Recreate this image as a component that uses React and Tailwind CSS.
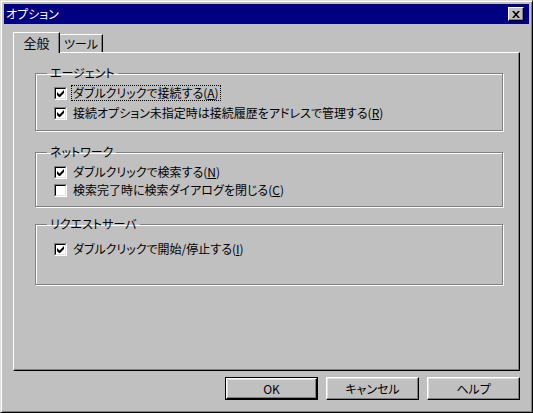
import React from "react";

const font = "font-['Noto_Sans_CJK_JP','Noto_Sans',sans-serif] [font-feature-settings:'palt']";

function CheckBox({ checked }) {
  return (
    <span className="w-[13px] h-[13px] shrink-0 border border-t-[#808080] border-l-[#808080] border-r-white border-b-white">
      <span className="flex w-full h-full items-center justify-center bg-white border border-t-black border-l-black border-r-[#dfdfdf] border-b-[#dfdfdf]">
        {checked && (
          <svg width="7" height="7" viewBox="0 0 7 7">
            <path d="M0 2v3l2 2h1l4-4V0L2.5 4.5z" fill="#000" />
          </svg>
        )}
      </span>
    </span>
  );
}

function Row({ checked, label, mnemonic, focused, h }) {
  return (
    <div className={`flex items-center gap-[5px] pl-[18px] ${h}`}>
      <CheckBox checked={checked} />
      <span
        className={`text-[12px] leading-[14px] px-[1px] text-black ${
          focused ? "outline outline-1 outline-dotted outline-black" : ""
        }`}
      >
        {label}(<u>{mnemonic}</u>)
      </span>
    </div>
  );
}

function Group({ title, children, className }) {
  return (
    <fieldset
      className={`border border-[#808080] shadow-[1px_1px_0_#fff,inset_1px_1px_0_#fff] ${className}`}
    >
      <legend className="ml-[11px] px-[3px] text-[12px] leading-[14px] text-black">
        {title}
      </legend>
      {children}
    </fieldset>
  );
}

function Button({ children, isDefault }) {
  return (
    <button
      className={`w-[93px] h-[23px] text-[12px] text-black bg-[#c0c0c0] ${
        isDefault ? "border border-black" : ""
      }`}
    >
      <span className="flex w-full h-full items-center justify-center border border-t-white border-l-white border-r-black border-b-black shadow-[inset_-1px_-1px_0_#808080,inset_1px_1px_0_#dfdfdf]">
        {children}
      </span>
    </button>
  );
}

export default function App() {
  return (
    <div className={`w-[533px] h-[413px] ${font} bg-[#c0c0c0] border border-t-[#dfdfdf] border-l-[#dfdfdf] border-r-black border-b-black shadow-[inset_1px_1px_0_#fff,inset_-1px_-1px_0_#808080] p-[3px] flex flex-col`}>
      {/* title bar */}
      <div className="h-[20px] bg-[#000080] flex items-center justify-between pl-[2px] pr-[5px]">
        <span className="text-white text-[12px] leading-[14px]">オプション</span>
        <span className="w-[16px] h-[14px] flex items-center justify-center bg-[#c0c0c0] border border-t-white border-l-white border-r-black border-b-black shadow-[inset_-1px_-1px_0_#808080]">
          <svg width="8" height="7" viewBox="0 0 8 7">
            <path d="M0 0h2l2 2.2L6 0h2L5 3.5 8 7H6L4 4.8 2 7H0l3-3.5z" fill="#000" />
          </svg>
        </span>
      </div>

      <div className="flex-1 flex flex-col px-[9px] pt-[8px] pb-[8px]">
        {/* tabs */}
        <div className="flex items-end h-[20px]">
          <div className="relative z-10 -mb-[1px] w-[47px] h-[21px] bg-[#c0c0c0] border-t border-l border-r border-t-white border-l-white border-r-black shadow-[inset_-1px_0_0_#808080] flex items-center justify-center text-[13px] text-black">
            全般
          </div>
          <div className="w-[43px] h-[18px] bg-[#c0c0c0] border-t border-r border-t-white border-r-black shadow-[inset_-1px_0_0_#808080] flex items-center justify-center text-[12px] text-black">
            ツール
          </div>
        </div>

        {/* panel */}
        <div className="h-[319px] border border-t-white border-l-white border-r-black border-b-black shadow-[inset_-1px_-1px_0_#808080] pt-[13px] pl-[21px] pr-[16px] flex flex-col">
          <Group title="エージェント" className="h-[65px]">
            <div className="pt-[3px]">
              <Row checked focused label="ダブルクリックで接続する" mnemonic="A" h="h-[20px]" />
              <Row checked label="接続オプション未指定時は接続履歴をアドレスで管理する" mnemonic="R" h="h-[20px]" />
            </div>
          </Group>
          <Group title="ネットワーク" className="h-[62px] mt-[14px]">
            <div className="pt-[4px]">
              <Row checked label="ダブルクリックで検索する" mnemonic="N" h="h-[18px]" />
              <Row label="検索完了時に検索ダイアログを閉じる" mnemonic="C" h="h-[18px]" />
            </div>
          </Group>
          <Group title="リクエストサーバ" className="h-[68px] mt-[10px]">
            <div className="pt-[9px]">
              <Row checked label="ダブルクリックで開始/停止する" mnemonic="I" h="h-[18px]" />
            </div>
          </Group>
        </div>

        {/* buttons */}
        <div className="mt-[6px] flex justify-end gap-[8px]">
          <Button isDefault>OK</Button>
          <Button>キャンセル</Button>
          <Button>ヘルプ</Button>
        </div>
      </div>
    </div>
  );
}
